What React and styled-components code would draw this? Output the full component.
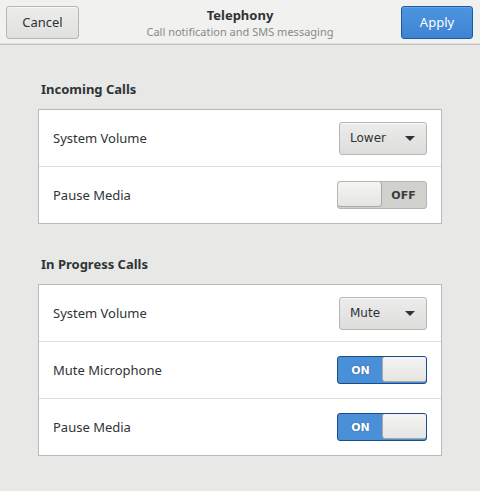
import React from 'react';
import styled, { createGlobalStyle } from 'styled-components';

const GlobalStyle = createGlobalStyle`
  html, body {
    margin: 0;
    padding: 0;
    background: #e8e8e7;
  }
  body {
    font-family: "Noto Sans", "DejaVu Sans", sans-serif;
    color: #2e3436;
  }
`;

const sections = [
  {
    title: 'Incoming Calls',
    rows: [
      { label: 'System Volume', kind: 'combo', value: 'Lower' },
      { label: 'Pause Media', kind: 'switch', on: false },
    ],
  },
  {
    title: 'In Progress Calls',
    rows: [
      { label: 'System Volume', kind: 'combo', value: 'Mute' },
      { label: 'Mute Microphone', kind: 'switch', on: true },
      { label: 'Pause Media', kind: 'switch', on: true },
    ],
  },
];

export default function App() {
  return (
    <Window>
      <GlobalStyle />
      <HeaderBar>
        <HeaderButton>Cancel</HeaderButton>
        <TitleBox>
          <Title>Telephony</Title>
          <Subtitle>Call notification and SMS messaging</Subtitle>
        </TitleBox>
        <HeaderButton $suggested>Apply</HeaderButton>
      </HeaderBar>
      <Content>
        {sections.map((section) => (
          <Section key={section.title}>
            <SectionTitle>{section.title}</SectionTitle>
            <Frame>
              {section.rows.map((row, i) => (
                <Row key={i}>
                  <RowLabel>{row.label}</RowLabel>
                  {row.kind === 'combo' ? (
                    <Combo>
                      <span>{row.value}</span>
                      <Arrow />
                    </Combo>
                  ) : (
                    <Switch $on={row.on}>
                      {row.on ? (
                        <>
                          <SwitchText $on>ON</SwitchText>
                          <Slider />
                        </>
                      ) : (
                        <>
                          <Slider />
                          <SwitchText>OFF</SwitchText>
                        </>
                      )}
                    </Switch>
                  )}
                </Row>
              ))}
            </Frame>
          </Section>
        ))}
      </Content>
    </Window>
  );
}

const Window = styled.div`
  width: 480px;
  height: 491px;
  background: #e8e8e7;
  overflow: hidden;
`;

const HeaderBar = styled.div`
  height: 45px;
  box-sizing: border-box;
  display: flex;
  align-items: center;
  justify-content: space-between;
  padding: 0 7px 0 6px;
  background: #f1f1f0;
  border-bottom: 1px solid #bfbfbc;
  box-shadow: inset 0 -1px 0 #e0e0de;
  position: relative;
`;

const HeaderButton = styled.button`
  width: ${(p) => (p.$suggested ? '72px' : '73px')};
  height: 33px;
  border-radius: 3px;
  font-family: "Noto Sans", "DejaVu Sans", sans-serif;
  font-size: 13px;
  padding: 0;
  border: 1px solid ${(p) => (p.$suggested ? '#1c5aa3' : '#b6b6b3')};
  background: ${(p) =>
    p.$suggested
      ? 'linear-gradient(to bottom, #4d94df, #3f84d4)'
      : 'linear-gradient(to bottom, #ececeb, #e0e0de)'};
  color: ${(p) => (p.$suggested ? '#ffffff' : '#2e3436')};
  box-shadow: inset 0 1px 0 ${(p) => (p.$suggested ? 'rgba(255,255,255,0.15)' : '#f8f8f7')};
`;

const TitleBox = styled.div`
  position: absolute;
  left: 0;
  right: 0;
  top: 6px;
  text-align: center;
  pointer-events: none;
`;

const Title = styled.div`
  font-weight: bold;
  font-size: 13px;
  line-height: 18px;
  color: #2e3436;
`;

const Subtitle = styled.div`
  font-size: 11px;
  line-height: 15px;
  color: #888a85;
`;

const Content = styled.div`
  padding: 0 38px;
`;

const Section = styled.section`
  padding-top: 32px;
  &:first-child {
    padding-top: 36px;
  }
`;

const SectionTitle = styled.div`
  font-weight: bold;
  font-size: 13px;
  line-height: 16px;
  color: #2e3436;
  padding-left: 3px;
  margin-bottom: 12px;
`;

const Frame = styled.div`
  background: #ffffff;
  border: 1px solid #b9b9b6;
`;

const Row = styled.div`
  height: 56px;
  display: flex;
  align-items: center;
  justify-content: space-between;
  padding: 0 14px;
  & + & {
    border-top: 1px solid #dededc;
  }
`;

const RowLabel = styled.span`
  font-size: 13px;
  color: #2e3436;
`;

const Combo = styled.div`
  width: 88px;
  height: 33px;
  box-sizing: border-box;
  display: flex;
  align-items: center;
  justify-content: space-between;
  padding: 0 10px 0 10px;
  border: 1px solid #b6b6b3;
  border-radius: 3px;
  background: linear-gradient(to bottom, #ececeb, #dddddb);
  box-shadow: inset 0 1px 0 #f8f8f7;
  font-family: "DejaVu Sans", sans-serif;
  font-size: 12px;
  color: #2e3436;
`;

const Arrow = styled.span`
  width: 0;
  height: 0;
  border-left: 5px solid transparent;
  border-right: 5px solid transparent;
  border-top: 5px solid #2e3436;
  margin-right: 1px;
`;

const Switch = styled.div`
  width: 90px;
  height: 28px;
  box-sizing: border-box;
  display: flex;
  border-radius: 3px;
  border: 1px solid ${(p) => (p.$on ? '#1b4c85' : '#b6b6b3')};
  background: ${(p) => (p.$on ? '#4a90d9' : '#d1d1ce')};
  overflow: hidden;
`;

const SwitchText = styled.span`
  flex: 1;
  display: flex;
  align-items: center;
  justify-content: center;
  font-family: "DejaVu Sans", sans-serif;
  font-weight: bold;
  font-size: 11px;
  color: ${(p) => (p.$on ? '#ffffff' : '#3c3c3c')};
  text-shadow: ${(p) => (p.$on ? '0 0 2px rgba(0,0,0,0.35)' : 'none')};
`;

const Slider = styled.span`
  width: 45px;
  height: 100%;
  box-sizing: border-box;
  border: 1px solid #a8a8a5;
  border-radius: 3px;
  margin: -1px;
  background: linear-gradient(to bottom, #f4f4f3, #e5e5e3);
`;
